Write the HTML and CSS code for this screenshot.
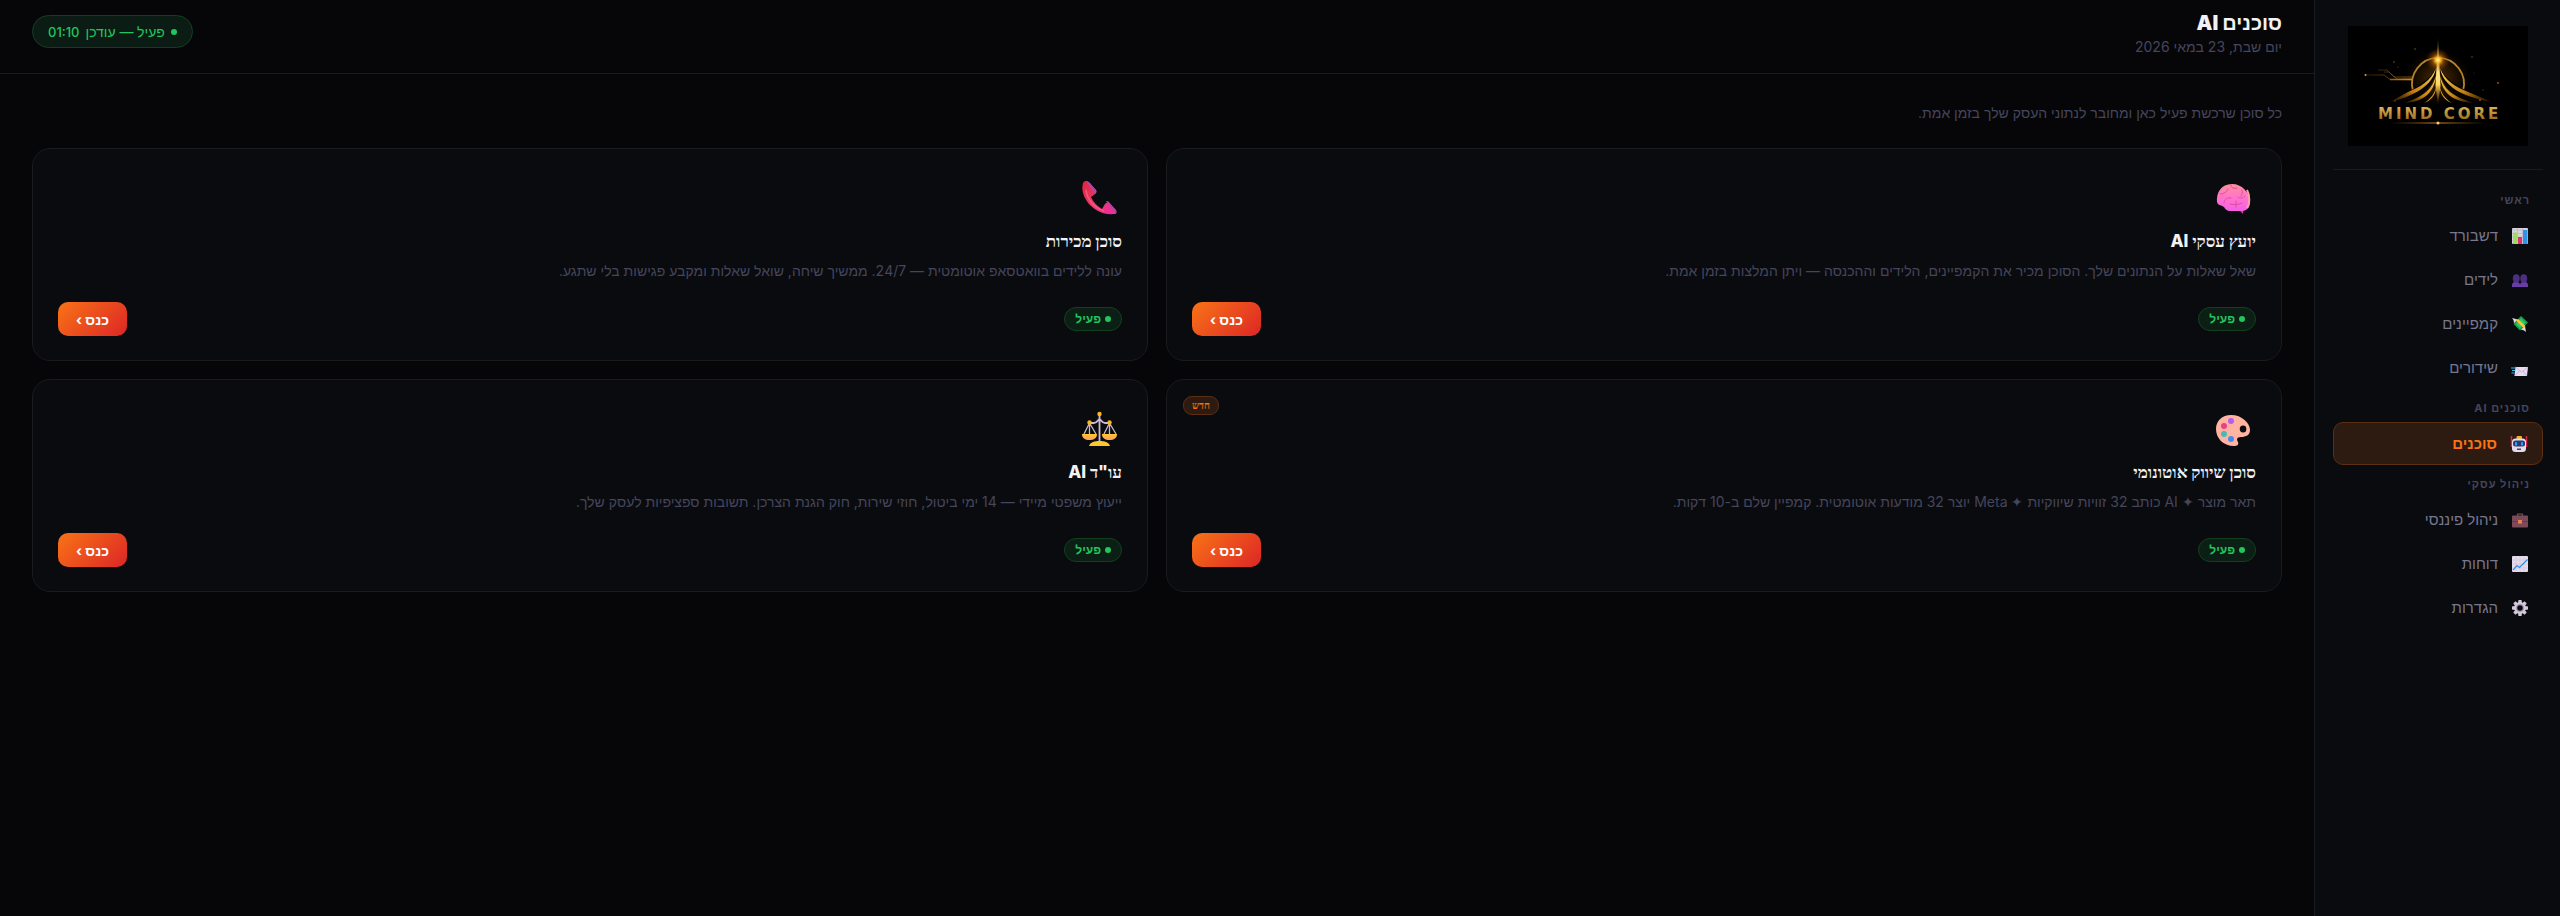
FILE: index.html
```html
<!DOCTYPE html>
<html lang="he" dir="rtl">
<head>
<meta charset="utf-8">
<meta name="viewport" content="width=device-width, initial-scale=1">
<title>סוכנים AI</title>
<link rel="stylesheet" href="styles.css">
</head>
<body>
<div class="app">
  <aside class="sidebar">
    <div class="brand">
      <svg class="brand-logo" viewBox="0 0 180 120" role="img" aria-label="Mind Core">
        <defs>
          <linearGradient id="gold" x1="0" y1="0" x2="0" y2="1"><stop offset="0" stop-color="#e8bd5c"/><stop offset="1" stop-color="#8a5a12"/></linearGradient>
          <linearGradient id="ray" x1="0" y1="0" x2="0" y2="1"><stop offset="0" stop-color="#ff9a10" stop-opacity="0"/><stop offset=".35" stop-color="#fff3b0"/><stop offset=".7" stop-color="#ffd860"/><stop offset="1" stop-color="#c06a00" stop-opacity="0"/></linearGradient>
          <linearGradient id="wingL" x1="1" y1="0" x2="0" y2="1"><stop offset="0" stop-color="#ffd45a"/><stop offset=".6" stop-color="#c07c10"/><stop offset="1" stop-color="#5c3200" stop-opacity=".3"/></linearGradient>
          <linearGradient id="wingR" x1="0" y1="0" x2="1" y2="1"><stop offset="0" stop-color="#ffd45a"/><stop offset=".6" stop-color="#c07c10"/><stop offset="1" stop-color="#5c3200" stop-opacity=".3"/></linearGradient>
          <linearGradient id="trace" gradientUnits="userSpaceOnUse" x1="17" y1="0" x2="64" y2="0"><stop offset="0" stop-color="#6a4208" stop-opacity=".5"/><stop offset="1" stop-color="#d08a1c"/></linearGradient>
          <linearGradient id="under" x1="0" y1="0" x2="1" y2="0"><stop offset="0" stop-color="#b87818" stop-opacity="0"/><stop offset=".5" stop-color="#d89020"/><stop offset="1" stop-color="#b87818" stop-opacity="0"/></linearGradient>
          <radialGradient id="glow"><stop offset="0" stop-color="#fffbe0"/><stop offset=".2" stop-color="#ffc22e"/><stop offset=".5" stop-color="#c86c00" stop-opacity=".5"/><stop offset="1" stop-color="#7a3c00" stop-opacity="0"/></radialGradient>
          <radialGradient id="haze"><stop offset="0" stop-color="#b86c08" stop-opacity=".45"/><stop offset="1" stop-color="#5c3200" stop-opacity="0"/></radialGradient>
        </defs>
        <rect width="180" height="120" fill="#000"/>
        <ellipse cx="90" cy="52" rx="34" ry="28" fill="url(#haze)"/>
        <path d="M65 65a26 26 0 1 1 50 0" fill="none" stroke="#b8842c" stroke-width="1.800"/>
        <g fill="none" stroke="url(#trace)">
          <path d="M17 49h19l6 4.500h22" stroke-width=".8"/>
          <path d="M30 44h9l7 7h18" stroke-width=".6"/>
          <path d="M36 46h5l8 7h14" stroke-width=".6"/>
          <path d="M42 53.500h22" stroke-width="1.600"/>
        </g>
        <circle cx="17.500" cy="49" r="1" fill="#e09a28"/>
        <path d="M89 40C82 56 66 63 40 76C66 76 87 66 89 40Z" fill="#060301"/>
        <path d="M91 40C98 56 114 63 142 76C114 76 93 66 91 40Z" fill="#060301"/>
        <path d="M88 42C83 55 72 61 60 66L42 76C66 70 85 60 88 42Z" fill="url(#wingL)"/>
        <path d="M88 50C84 63 77 70 56 77C74 76 86 68 88 50Z" fill="url(#wingL)"/>
        <path d="M89 58C87 67 83 73 76 77C85 74 88 67 89 58Z" fill="#d89a20"/>
        <path d="M92 42C97 55 108 61 120 66L144 76C114 71 95 60 92 42Z" fill="url(#wingR)"/>
        <path d="M92 50C96 63 103 70 126 77C106 76 94 68 92 50Z" fill="url(#wingR)"/>
        <path d="M91 58C93 67 97 73 104 77C95 74 92 67 91 58Z" fill="#d89a20"/>
        <path d="M90 10L91 32L92.500 60L90 79L87.500 60L89 32Z" fill="url(#ray)"/>
        <circle cx="90" cy="34" r="12" fill="url(#glow)"/>
        <g fill="#8a5610"><circle cx="67" cy="23" r=".8"/><circle cx="46" cy="36" r=".8"/><circle cx="50" cy="41" r=".5"/><circle cx="124" cy="31" r=".7"/><circle cx="150" cy="57" r="1"/><circle cx="135" cy="64" r=".6"/><circle cx="56" cy="52" r=".5"/><circle cx="132" cy="74" r="1"/><circle cx="126" cy="47" r=".4"/><circle cx="47" cy="75" r=".7"/></g>
        <text class="brand-name" x="30" y="93" direction="ltr" fill="url(#gold)">MIND CORE</text>
        <rect x="42" y="96.500" width="96" height="1" fill="url(#under)"/>
        <circle cx="90" cy="97" r="1.500" fill="#ffd060"/>
      </svg>
    </div>
    <nav class="nav">
      <h2 class="nav-label">ראשי</h2>
      <a class="nav-item" href="#">
        <svg class="nav-icon" viewBox="0 0 32 32" aria-hidden="true"><rect y="0" width="32" height="32" rx="2" fill="#d9d2df"/><path d="M0 4h32M0 11h32M0 18h32M0 25h32M11 0v32M21 0v32" stroke="#b3a9bd" stroke-width="1"/><rect x="2" y="9" width="8" height="23" fill="#9bdc5a"/><rect x="12" y="18" width="8" height="14" fill="#e0306e"/><rect x="22" y="4" width="9" height="28" fill="#2f93e6"/></svg>
        <span>דשבורד</span></a>
      <a class="nav-item" href="#">
        <svg class="nav-icon" viewBox="0 0 32 32" aria-hidden="true"><path d="M0 30v-4c0-5 4-6 8-6s8 1 8 6v4zM16 30v-4c0-5 4-6 8-6s8 1 8 6v4z" fill="#6a3ca6"/><ellipse cx="8.500" cy="13" rx="7" ry="8.500" fill="#4b2f80"/><ellipse cx="23.500" cy="13" rx="7" ry="8.500" fill="#4b2f80"/></svg>
        <span>לידים</span></a>
      <a class="nav-item" href="#">
        <svg class="nav-icon" viewBox="0 0 32 32" aria-hidden="true"><path d="M0 4l12 3-8 8c0-4-1-8-4-11zM28 32l-2-12-9 7c4 0 8 2 11 5z" fill="#ddd6e2"/><path d="M18 0l14 13-16 16L3 16z" fill="#17a34e"/><path d="M18 5l9 8-11 11-8-8z" fill="#31c86b"/><path d="M8 9l4-3 15 14-4 4z" fill="#ffc531"/></svg>
        <span>קמפיינים</span></a>
      <a class="nav-item" href="#">
        <svg class="nav-icon" viewBox="0 0 32 32" aria-hidden="true"><path d="M-2 16h9M0 21h6M-1 26h6" stroke="#37bfe8" stroke-width="2"/><path d="M7 14h25l-2 18H5z" fill="#e9dcf3"/><path d="M7 14l12 10 13-10M5 32l10-10M30 32l-8-10" fill="none" stroke="#bda9cd" stroke-width="1.500"/></svg>
        <span>שידורים</span></a>
      <h2 class="nav-label">סוכנים AI</h2>
      <a class="nav-item nav-item-active" href="#" aria-current="page">
        <svg class="nav-icon" viewBox="0 0 32 32" aria-hidden="true"><path d="M1 0v22M31 0v22" stroke="#d92852" stroke-width="3"/><rect x="11" y="0" width="11" height="6" rx="2" fill="#f5b21a"/><rect x="2" y="5" width="28" height="27" rx="7" fill="#e4dcec"/><rect x="4" y="9" width="24" height="12" rx="5" fill="#31356b"/><rect x="8" y="12" width="4" height="7" rx="1" fill="#22a7f2"/><rect x="20" y="12" width="4" height="7" rx="1" fill="#22a7f2"/><rect x="12" y="25" width="8" height="3" fill="#45416b"/></svg>
        <span>סוכנים</span></a>
      <h2 class="nav-label">ניהול עסקי</h2>
      <a class="nav-item" href="#">
        <svg class="nav-icon" viewBox="0 0 32 32" aria-hidden="true"><path d="M11 8V4h10v4" fill="none" stroke="#744850" stroke-width="2.500"/><rect y="7" width="32" height="24" rx="2" fill="#7d4a5a"/><rect y="18" width="32" height="1.500" fill="#5e3648"/><rect x="12" y="16" width="8" height="7" rx="1" fill="#e88450"/></svg>
        <span>ניהול פיננסי</span></a>
      <a class="nav-item" href="#">
        <svg class="nav-icon" viewBox="0 0 32 32" aria-hidden="true"><rect width="32" height="32" rx="2" fill="#e4dcec"/><path d="M0 8h32M0 16h32M0 24h32M8 0v32M16 0v32M24 0v32" stroke="#cabfd4"/><path d="M2 28l8-9 5 4L31 7" fill="none" stroke="#318fe0" stroke-width="2.500"/></svg>
        <span>דוחות</span></a>
      <a class="nav-item" href="#">
        <svg class="nav-icon" viewBox="0 0 32 32" aria-hidden="true"><g fill="#d5cadd"><rect x="12.500" width="7" height="32" rx="1.500"/><rect x="12.500" width="7" height="32" rx="1.500" transform="rotate(45 16 16)"/><rect x="12.500" width="7" height="32" rx="1.500" transform="rotate(90 16 16)"/><rect x="12.500" width="7" height="32" rx="1.500" transform="rotate(135 16 16)"/><circle cx="16" cy="16" r="12"/></g><circle cx="16" cy="16" r="8" fill="#a99bb5"/><circle cx="16" cy="16" r="5.500" fill="#0a0b0f"/></svg>
        <span>הגדרות</span></a>
    </nav>
  </aside>

  <div class="page">
    <header class="topbar">
      <div>
        <h1 class="title">סוכנים AI</h1>
        <p class="date">יום שבת, 23 במאי 2026</p>
      </div>
      <div class="live"><span class="dot"></span><span>פעיל — עודכן</span><time>01:10</time></div>
    </header>
    <main class="content">
      <p class="intro">כל סוכן שרכשת פעיל כאן ומחובר לנתוני העסק שלך בזמן אמת.</p>
      <div class="grid">
        <article class="card">
          <svg class="card-icon" viewBox="0 0 44 50" aria-hidden="true">
            <defs><linearGradient id="brain" x1="0" y1="0" x2="0" y2="1"><stop offset="0" stop-color="#ff8f9c"/><stop offset=".6" stop-color="#ff6fd2"/><stop offset="1" stop-color="#f45fe6"/></linearGradient></defs>
            <path d="M26 34h6l-1 7-3-3z" fill="#d9369c"/>
            <path d="M5 29C4 20 9 11 20 11c10 0 17 8 18 17 0 5-2 9-7 10H18c-3 0-5-2-6-4-2-2-6-1-7-5z" fill="url(#brain)"/>
            <path d="M35 17c3 5 3 14 0 18" fill="none" stroke="#ff9fb2" stroke-width="2"/>
            <path d="M8 21c4 0 7-2 8-5M19 12c0 3 3 4 6 3M12 30c0-4 4-6 7-5M26 24c2 2 5 1 7-1M30 17c1 2 0 4-1 6M18 31c4 1 8 1 12-1M24 28v6" fill="none" stroke="#e04f9f" stroke-width="1" stroke-linecap="round"/>
          </svg>
          <h2 class="card-title">יועץ עסקי AI</h2>
          <p class="card-text">שאל שאלות על הנתונים שלך. הסוכן מכיר את הקמפיינים, הלידים וההכנסה — ויתן המלצות בזמן אמת.</p>
          <div class="card-foot"><span class="status"><span class="dot"></span>פעיל</span><button class="enter" type="button">כנס ›</button></div>
        </article>
        <article class="card">
          <svg class="card-icon" viewBox="0 0 44 50" aria-hidden="true">
            <defs><linearGradient id="phone" x1="0" y1="0" x2="1" y2="1"><stop offset="0" stop-color="#e02440"/><stop offset=".5" stop-color="#ea3a66"/><stop offset="1" stop-color="#f02aa8"/></linearGradient></defs>
            <path d="M5 10c2-3 5-2 6 0l7 7c1 2 0 3-1 4l-4 3c2 5 6 9 11 12l3-5c1-1 3-2 4 0l7 6c1 2 1 4-2 4C17 43 1 25 5 10z" fill="url(#phone)"/>
            <path d="M8 8c2 0 3 1 4 2l6 7c1 2 0 3-1 4zM28 28c1 0 2 0 3 1l6 7c1 1 2 3 0 4z" fill="#b0489f"/>
            <path d="M8 17c1 9 8 18 18 21" fill="none" stroke="#f5587c" stroke-width="1.500"/>
          </svg>
          <h2 class="card-title">סוכן מכירות</h2>
          <p class="card-text">עונה ללידים בוואטסאפ אוטומטית — 24/7. ממשיך שיחה, שואל שאלות ומקבע פגישות בלי שתגע.</p>
          <div class="card-foot"><span class="status"><span class="dot"></span>פעיל</span><button class="enter" type="button">כנס ›</button></div>
        </article>
        <article class="card">
          <span class="tag">חדש</span>
          <svg class="card-icon" viewBox="0 0 44 50" aria-hidden="true">
            <path fill-rule="evenodd" d="M19 11c11 0 19 8 19 15 0 5-4 7-9 7-3 0-4 1-4 3l1 2c1 3-1 4-4 4C11 42 4 34 4 25c0-8 6-14 15-14zM31 21.500a3.300 3.500 0 1 0 .1 7 3.300 3.500 0 0 0-.1-7z" fill="#ffb3a0"/>
            <circle cx="19" cy="17" r="3" fill="#b85cf0"/><circle cx="12" cy="22" r="3" fill="#f23d85"/><circle cx="12" cy="30" r="3" fill="#48b9b4"/><circle cx="19" cy="35" r="3" fill="#438df0"/>
          </svg>
          <h2 class="card-title">סוכן שיווק אוטונומי</h2>
          <p class="card-text">תאר מוצר ✦ AI כותב 32 זוויות שיווקיות ✦ Meta יוצר 32 מודעות אוטומטית. קמפיין שלם ב-10 דקות.</p>
          <div class="card-foot"><span class="status"><span class="dot"></span>פעיל</span><button class="enter" type="button">כנס ›</button></div>
        </article>
        <article class="card">
          <svg class="card-icon" viewBox="0 0 44 50" aria-hidden="true">
            <defs><linearGradient id="pan" x1="0" y1="0" x2="0" y2="1"><stop offset="0" stop-color="#ffc928"/><stop offset="1" stop-color="#ff9a6c"/></linearGradient></defs>
            <path d="M21.500 11v28M11 19h5c3 0 4-3 5.500-4 1.500 1 2.500 4 5.500 4h5" fill="none" stroke="#cdb9cf" stroke-width="1.800"/>
            <path d="M11.500 19L6 30M11.500 19v11M11.500 19L18 30M31.500 19L26 30M31.500 19v11M31.500 19L38 30" stroke="#c6b3c9" stroke-width="1.300"/>
            <path d="M4 30h15c0 4-3 6-7.500 6S4 34 4 30zM24 30h15c0 4-3 6-7.500 6S24 34 24 30z" fill="url(#pan)"/>
            <path d="M11 42c1-4 6-5 10.500-5S31 38 32 42z" fill="#ffc72c"/>
            <circle cx="21.500" cy="10" r="2.200" fill="#ffb51c"/><circle cx="11.500" cy="18.500" r="2.200" fill="#ffb51c"/><circle cx="31.500" cy="18.500" r="2.200" fill="#ffb51c"/>
          </svg>
          <h2 class="card-title">עו"ד AI</h2>
          <p class="card-text">ייעוץ משפטי מיידי — 14 ימי ביטול, חוזי שירות, חוק הגנת הצרכן. תשובות ספציפיות לעסק שלך.</p>
          <div class="card-foot"><span class="status"><span class="dot"></span>פעיל</span><button class="enter" type="button">כנס ›</button></div>
        </article>
      </div>
    </main>
  </div>
</div>
</body>
</html>
```

FILE: styles.css
```css
* { box-sizing: border-box; }

body {
  margin: 0;
  background: #060608;
  color: #f1f1f6;
  font-family: Inter, "Liberation Sans", sans-serif;
  font-size: 14px;
}

h1, h2, p { margin: 0; }

.app { display: flex; min-height: 100vh; }

.sidebar {
  flex: 0 0 246px;
  padding: 26px 17px 24px 18px;
  background: #0a0b0f;
  border-left: 1px solid #1a1b1f;
}

.brand {
  display: flex;
  justify-content: center;
  padding-bottom: 23px;
  border-bottom: 1px solid #1a1b1f;
}

.brand-logo { display: block; width: 180px; height: 120px; }

.brand-name {
  font-family: "DejaVu Sans", sans-serif;
  font-size: 15px;
  font-weight: 700;
  letter-spacing: 3px;
}

.nav { display: flex; flex-direction: column; gap: 1px; padding-top: 12px; }

.nav-label {
  height: 31px;
  padding: 10px 13px 0;
  color: #45455c;
  font-size: 11px;
  font-weight: 700;
  line-height: 16px;
  letter-spacing: 1px;
}

.nav-item {
  display: flex;
  align-items: center;
  gap: 14px;
  height: 43px;
  padding: 0 15px;
  border-radius: 10px;
  color: #77778f;
  font-size: 15px;
  font-weight: 500;
  text-decoration: none;
}

.nav-icon { width: 16px; height: 16px; overflow: visible; }

.nav-item-active {
  background: #2d1a10;
  border: 1px solid #5c2e12;
  color: #f97316;
  font-weight: 700;
}

.page { flex: 1; min-width: 0; }

.topbar {
  display: flex;
  align-items: flex-start;
  justify-content: space-between;
  height: 74px;
  padding: 10px 32px 0;
  border-bottom: 1px solid #1a1b1f;
}

.title { font-size: 20px; font-weight: 900; line-height: 26px; }

.date { color: #45455c; font-size: 14px; line-height: 22px; }

.live {
  display: flex;
  align-items: center;
  gap: 6px;
  height: 33px;
  margin-top: 5px;
  padding: 0 15px;
  background: #0b1c14;
  border: 1px solid #12401f;
  border-radius: 17px;
  color: #22c55e;
  font-size: 14px;
  font-weight: 500;
}

.live time { font-size: 13px; }

.dot { width: 6px; height: 6px; border-radius: 50%; background: currentColor; }

.content { padding: 28px 32px; }

.intro { margin-bottom: 24px; color: #45455c; font-size: 14px; line-height: 22px; }

.grid { display: grid; grid-template-columns: 1fr 1fr; gap: 18px; }

.card {
  position: relative;
  padding: 24px 25px;
  background: #0a0b0f;
  border: 1px solid #1a1b1f;
  border-radius: 18px;
}

.card-icon { display: block; width: 44px; height: 50px; margin-bottom: 7px; }

.card-title {
  margin-bottom: 7px;
  font-family: Inter, "Liberation Serif", serif;
  font-size: 17px;
  font-weight: 800;
  line-height: 22px;
}

.card-text { margin-bottom: 19px; color: #45455c; font-size: 14px; line-height: 24px; }

.card-foot { display: flex; align-items: center; justify-content: space-between; }

.status {
  display: flex;
  align-items: center;
  gap: 4px;
  padding: 0 10px;
  background: #0b1f15;
  border: 1px solid #12401f;
  border-radius: 12px;
  color: #22c55e;
  font-size: 12px;
  font-weight: 600;
  line-height: 22px;
}

.enter {
  height: 34px;
  padding: 0 18px;
  background: linear-gradient(135deg, #f97316, #dc2626);
  border: 0;
  border-radius: 10px;
  color: #fff;
  font-family: inherit;
  font-size: 14px;
  font-weight: 700;
}

.tag {
  position: absolute;
  top: 16px;
  left: 16px;
  padding: 0 8px;
  background: #2d1a10;
  border: 1px solid #5c2e12;
  border-radius: 9px;
  color: #f97316;
  font-family: Inter, "Liberation Serif", serif;
  font-size: 10px;
  font-weight: 800;
  line-height: 17px;
}
```
